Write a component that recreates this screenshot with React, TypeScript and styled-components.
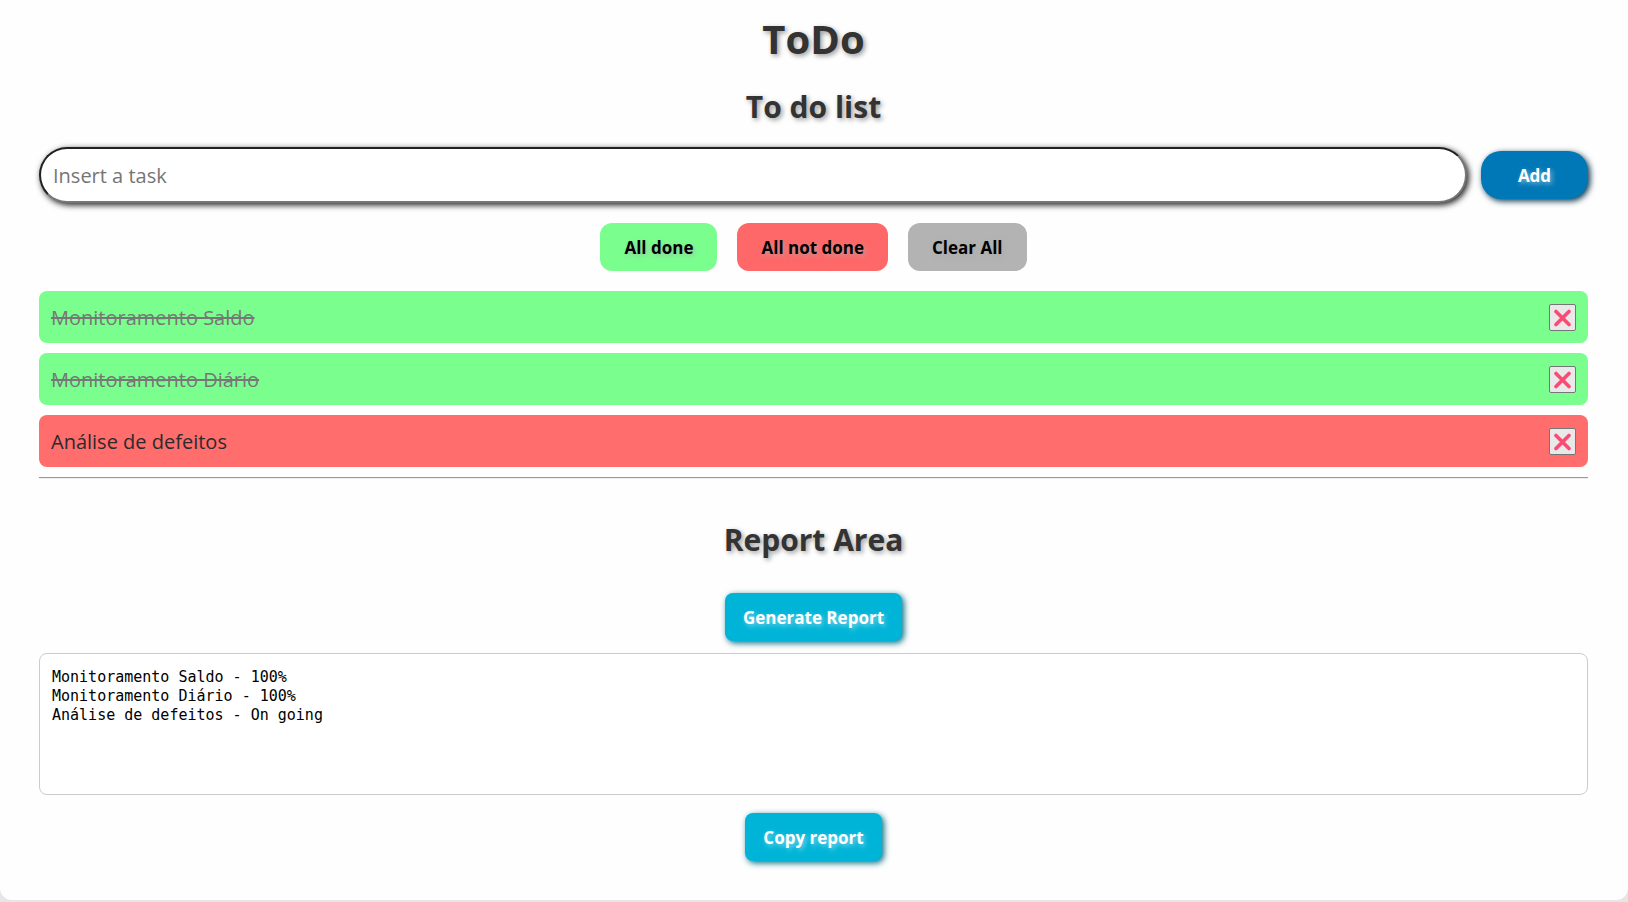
import React, { useState } from "react";
import styled, { createGlobalStyle } from "styled-components";

const GlobalStyle = createGlobalStyle`
  * {
    box-sizing: border-box;
  }

  body {
    margin: 0;
    background: #e6e6e6;
    color: #333;
    font-family: "Open Sans", sans-serif;
    font-size: 20px;
  }
`;

const Page = styled.main`
  padding: 12px 40px 39px 39px;
  background: #fefefe;
  border-radius: 0 0 12px 12px;
`;

const Title = styled.h1`
  margin: 0 0 20px;
  font-size: 40px;
  line-height: 54px;
  text-align: center;
  text-shadow: 2px 2px 5px rgba(0, 0, 0, 0.4);
`;

const Heading = styled.h2`
  margin: 0 0 19px;
  font-size: 30px;
  line-height: 42px;
  text-align: center;
  text-shadow: 2px 2px 5px rgba(0, 0, 0, 0.4);
`;

const TaskForm = styled.form`
  display: flex;
  align-items: center;
  gap: 14px;
  margin-bottom: 20px;
`;

const TaskInput = styled.input`
  flex: 1;
  min-width: 0;
  height: 56px;
  padding: 0 12px;
  border: 2px inset #767676;
  border-radius: 28px;
  background: #fff;
  box-shadow: 2px 2px 6px rgba(0, 0, 0, 0.9);
  color: #333;
  font: inherit;

  &::placeholder {
    color: #757575;
  }
`;

const Button = styled.button`
  height: 48px;
  border: 0;
  font-family: inherit;
  font-size: 17px;
  font-weight: 700;
  cursor: pointer;
`;

const AddButton = styled(Button)`
  width: 107px;
  border-radius: 20px;
  background: #0077b6;
  box-shadow: 2px 2px 6px #023047;
  color: #fff;
  text-shadow: 2px 2px 5px rgba(255, 255, 255, 0.5);
`;

const Filters = styled.div`
  display: flex;
  justify-content: center;
  gap: 20px;
  margin-bottom: 20px;
`;

const FilterButton = styled(Button)<{ $color: string }>`
  padding: 0 24px;
  border-radius: 12px;
  background: ${(p) => p.$color};
  color: #000;
  text-shadow: 2px 2px 5px rgba(170, 170, 170, 0.7);
`;

const TaskList = styled.ul`
  display: flex;
  flex-direction: column;
  gap: 10px;
  margin: 0 0 10px;
  padding: 0;
  list-style: none;
`;

const Task = styled.li<{ $done: boolean }>`
  display: flex;
  align-items: center;
  justify-content: space-between;
  height: 52px;
  padding: 0 12px;
  border-radius: 8px;
  background: ${(p) => (p.$done ? "#7aff8e" : "#ff6d6d")};
  color: ${(p) => (p.$done ? "#777" : "#2b2b2b")};
  text-decoration: ${(p) => (p.$done ? "line-through" : "none")};
`;

const RemoveButton = styled.button`
  display: grid;
  place-items: center;
  width: 27px;
  height: 27px;
  padding: 0;
  border: 1px solid #767676;
  border-radius: 2px;
  background: #e9e9e9;
  cursor: pointer;
`;

const Divider = styled.hr`
  height: 2px;
  margin: 0 0 40px;
  border: solid;
  border-width: 1px 0;
  border-color: #999 transparent #eee;
`;

const Report = styled.section`
  display: flex;
  flex-direction: column;
  align-items: center;
`;

const ReportHeading = styled(Heading)`
  margin-bottom: 32px;
`;

const ReportButton = styled(Button)`
  padding: 0 18px;
  border-radius: 8px;
  background: #00b4d8;
  box-shadow: 2px 2px 6px #006d83;
  color: #fff;
  text-shadow: 2px 2px 5px rgba(255, 255, 255, 0.5);
`;

const ReportText = styled.textarea`
  display: block;
  width: 100%;
  height: 142px;
  margin: 12px 0 18px;
  padding: 14px 12px;
  border: 1px solid #ccc;
  border-radius: 8px;
  background: #fff;
  color: #000;
  font-family: Consolas, "DejaVu Sans Mono", monospace;
  font-size: 15px;
  line-height: 19px;
  resize: none;
`;

const initialTasks = [
  { name: "Monitoramento Saldo", done: true },
  { name: "Monitoramento Diário", done: true },
  { name: "Análise de defeitos", done: false },
];

type TaskItem = (typeof initialTasks)[number];

const buildReport = (tasks: TaskItem[]) =>
  tasks.map((t) => `${t.name} - ${t.done ? "100%" : "On going"}`).join("\n");

const CrossIcon = () => (
  <svg width="19" height="19" viewBox="0 0 19 19" aria-hidden="true">
    <path
      d="M3 3.5 16 16.5M16 3.5 3 16.5"
      stroke="#fa4b74"
      strokeWidth="3.6"
      strokeLinecap="round"
    />
  </svg>
);

export default function App() {
  const [tasks, setTasks] = useState(initialTasks);
  const [draft, setDraft] = useState("");
  const [report, setReport] = useState(buildReport(initialTasks));

  const addTask = (event: React.FormEvent) => {
    event.preventDefault();
    if (!draft.trim()) return;
    setTasks([...tasks, { name: draft.trim(), done: false }]);
    setDraft("");
  };

  const markAll = (done: boolean) => setTasks(tasks.map((t) => ({ ...t, done })));

  return (
    <>
      <GlobalStyle />
      <Page>
        <Title>ToDo</Title>
        <Heading>To do list</Heading>
        <TaskForm onSubmit={addTask}>
          <TaskInput
            aria-label="Task"
            placeholder="Insert a task"
            value={draft}
            onChange={(e) => setDraft(e.target.value)}
          />
          <AddButton type="submit">Add</AddButton>
        </TaskForm>
        <Filters>
          <FilterButton $color="#7aff8e" onClick={() => markAll(true)}>All done</FilterButton>
          <FilterButton $color="#ff6868" onClick={() => markAll(false)}>All not done</FilterButton>
          <FilterButton $color="#b3b3b3" onClick={() => setTasks([])}>Clear All</FilterButton>
        </Filters>
        <TaskList>
          {tasks.map((task, index) => (
            <Task key={index} $done={task.done}>
              <span>{task.name}</span>
              <RemoveButton
                aria-label={`Remove ${task.name}`}
                onClick={() => setTasks(tasks.filter((_, i) => i !== index))}
              >
                <CrossIcon />
              </RemoveButton>
            </Task>
          ))}
        </TaskList>
        <Divider />
        <Report>
          <ReportHeading>Report Area</ReportHeading>
          <ReportButton onClick={() => setReport(buildReport(tasks))}>Generate Report</ReportButton>
          <ReportText aria-label="Report" readOnly value={report} spellCheck={false} />
          <ReportButton onClick={() => navigator.clipboard?.writeText(report)}>Copy report</ReportButton>
        </Report>
      </Page>
    </>
  );
}
